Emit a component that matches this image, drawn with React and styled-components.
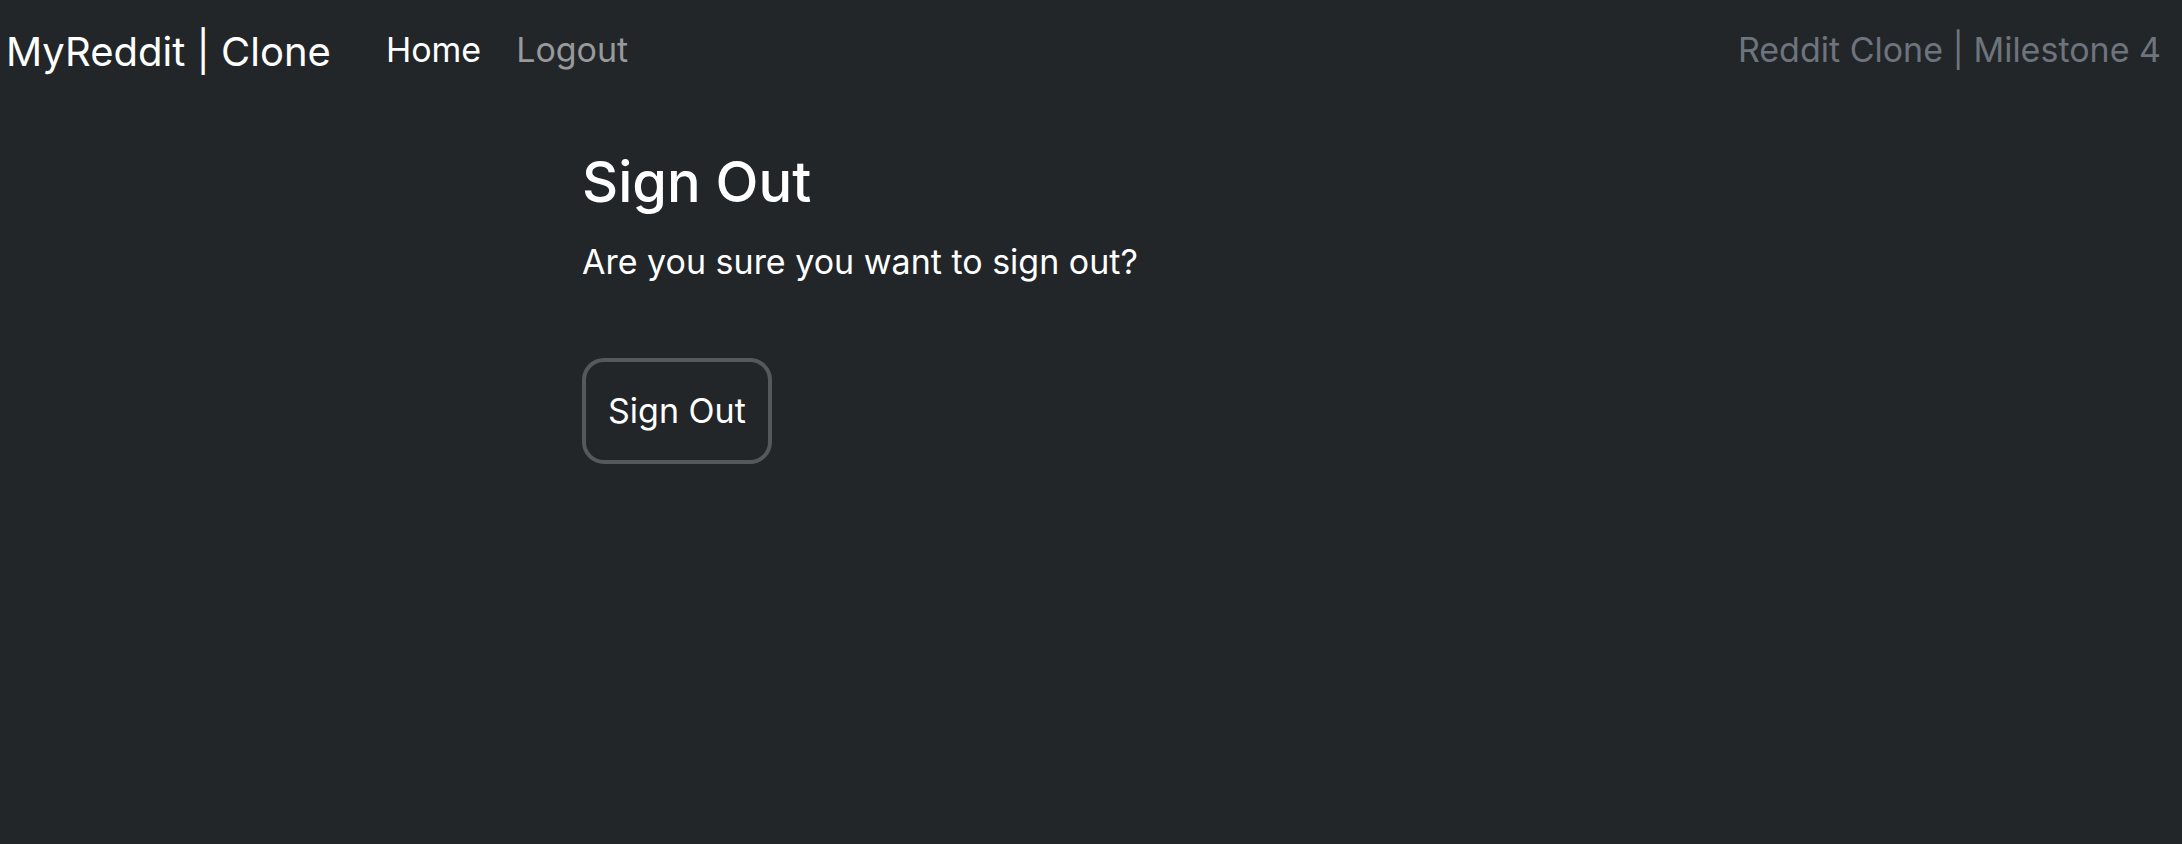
import React from "react";
import styled, { createGlobalStyle } from "styled-components";

const GlobalStyle = createGlobalStyle`
  * { box-sizing: border-box; }
  body {
    margin: 0;
    min-height: 100vh;
    background: #222629;
    color: #fff;
    font-family: Inter, "Liberation Sans", sans-serif;
    font-size: 34px;
    line-height: 52px;
  }
`;

const Navbar = styled.header`
  display: flex;
  align-items: flex-start;
  padding: 24px 21px 24px 6px;
`;

const Brand = styled.a`
  margin-right: 55px;
  font-size: 40px;
  line-height: 56px;
  color: #fff;
  text-decoration: none;
  white-space: nowrap;
`;

const Nav = styled.nav`
  display: flex;
  flex: 1;
  gap: 35px;
`;

const NavLink = styled.a`
  color: ${(p) => (p.$active ? "#fff" : "#98999b")};
  text-decoration: none;
`;

const NavText = styled.span`
  color: #6e747d;
  white-space: nowrap;
`;

const Main = styled.main`
  width: 1018px;
  max-width: 100%;
  margin: 0 auto;
  padding-top: 44px;
`;

const Title = styled.h1`
  margin: 0 0 20px;
  font-size: 56px;
  font-weight: 500;
  line-height: 68px;
`;

const Message = styled.p`
  margin: 0 0 70px;
`;

const SignOutButton = styled.button`
  padding: 23px 22px;
  border: 4px solid #55595c;
  border-radius: 22px;
  background: transparent;
  color: #fff;
  font: inherit;
  cursor: pointer;
`;

export default function App() {
  return (
    <>
      <GlobalStyle />
      <Navbar>
        <Brand href="#">MyReddit | Clone</Brand>
        <Nav>
          <NavLink href="#" $active>Home</NavLink>
          <NavLink href="#">Logout</NavLink>
        </Nav>
        <NavText>Reddit Clone | Milestone 4</NavText>
      </Navbar>
      <Main>
        <Title>Sign Out</Title>
        <Message>Are you sure you want to sign out?</Message>
        <form onSubmit={(e) => e.preventDefault()}>
          <SignOutButton type="submit">Sign Out</SignOutButton>
        </form>
      </Main>
    </>
  );
}
